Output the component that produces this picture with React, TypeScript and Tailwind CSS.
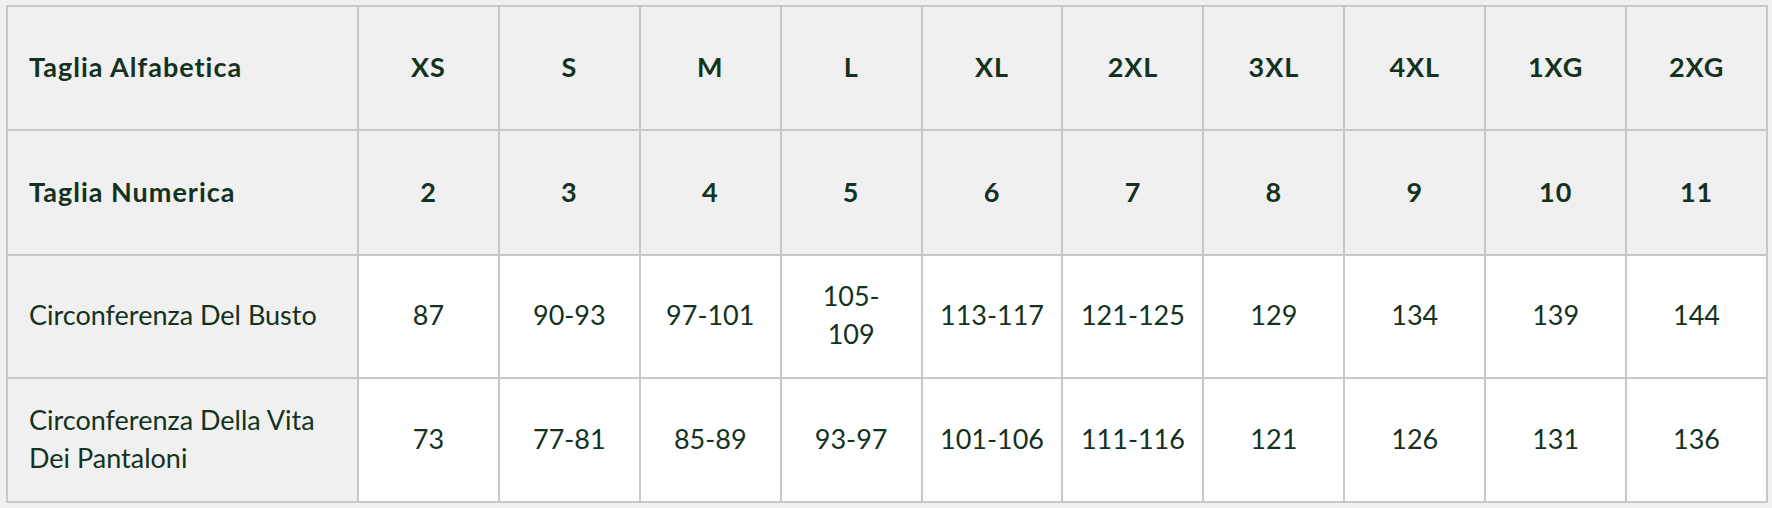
import React from "react";

const sizes = ["XS", "S", "M", "L", "XL", "2XL", "3XL", "4XL", "1XG", "2XG"];
const nums = ["2", "3", "4", "5", "6", "7", "8", "9", "10", "11"];
const busto: React.ReactNode[] = ["87", "90-93", "97-101", <>105-<br />109</>, "113-117", "121-125", "129", "134", "139", "144"];
const vita = ["73", "77-81", "85-89", "93-97", "101-106", "111-116", "121", "126", "131", "136"];

function HeadRow({ label, values }: { label: string; values: string[] }) {
  return (
    <>
      <div className="bg-[#f0f0f0] flex items-center pl-[21px] pr-4 pb-[2px] font-bold tracking-[1px]">{label}</div>
      {values.map((v, i) => (
        <div key={i} className="bg-[#f0f0f0] flex items-center justify-center pb-[2px] font-bold tracking-[0.9px]">{v}</div>
      ))}
    </>
  );
}

function DataRow({ label, values }: { label: React.ReactNode; values: React.ReactNode[] }) {
  return (
    <>
      <div className="bg-[#f0f0f0] flex items-center pl-[21px] pr-4 pb-[3px]">{label}</div>
      {values.map((v, i) => (
        <div key={i} className="bg-white flex items-center justify-center text-center px-4 pb-[3px]">{v}</div>
      ))}
    </>
  );
}

export default function App() {
  return (
    <div className="w-[1772px] h-[508px] bg-[#f0f0f0] pt-[5px] pl-[6px]">
      <div
        className="w-[1762px] grid grid-cols-[349px_repeat(10,1fr)] grid-rows-[122px_123px_121px_122px] gap-[2px] bg-[#c8c8c8] border-2 border-[#c8c8c8] text-[#143220] text-[27px] leading-[38px]"
        style={{ fontFamily: "Lato, 'Noto Sans', sans-serif" }}
      >
        <HeadRow label="Taglia Alfabetica" values={sizes} />
        <HeadRow label="Taglia Numerica" values={nums} />
        <DataRow label="Circonferenza Del Busto" values={busto} />
        <DataRow label={<>Circonferenza Della Vita<br />Dei Pantaloni</>} values={vita} />
      </div>
    </div>
  );
}
